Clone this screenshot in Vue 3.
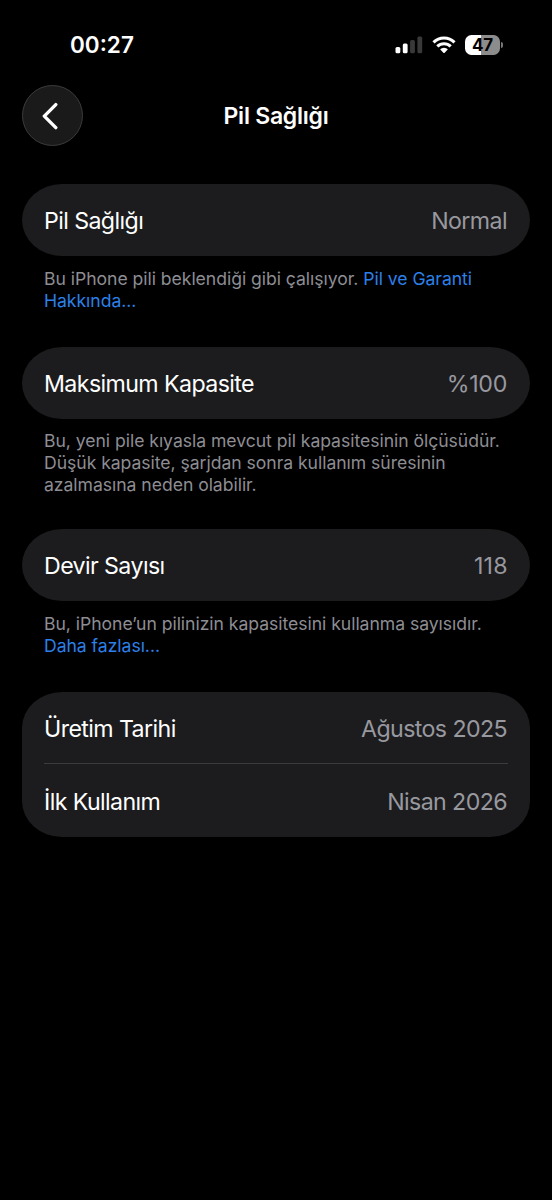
<script setup>
const sections = [
  {
    id: 'health',
    rows: [{ label: 'Pil Sağlığı', value: 'Normal' }],
    lines: [
      { text: 'Bu iPhone pili beklendiği gibi çalışıyor. ', link: 'Pil ve Garanti' },
      { link: 'Hakkında...' },
    ],
  },
  {
    id: 'capacity',
    rows: [{ label: 'Maksimum Kapasite', value: '%100' }],
    lines: [
      { text: 'Bu, yeni pile kıyasla mevcut pil kapasitesinin ölçüsüdür.' },
      { text: 'Düşük kapasite, şarjdan sonra kullanım süresinin' },
      { text: 'azalmasına neden olabilir.' },
    ],
  },
  {
    id: 'cycles',
    rows: [{ label: 'Devir Sayısı', value: '118' }],
    lines: [
      { text: 'Bu, iPhone’un pilinizin kapasitesini kullanma sayısıdır.' },
      { link: 'Daha fazlası...' },
    ],
  },
  {
    id: 'dates',
    rows: [
      { label: 'Üretim Tarihi', value: 'Ağustos 2025' },
      { label: 'İlk Kullanım', value: 'Nisan 2026' },
    ],
    lines: [],
  },
]
</script>

<template>
  <main class="screen">
    <div class="status">
      <span class="time">00:27</span>
      <div class="indicators">
        <svg class="signal" width="28" height="18" viewBox="0 0 28 18">
          <rect x="0.5" y="11" width="4.8" height="6.3" rx="1.5" fill="#fff" />
          <rect x="7.8" y="7.5" width="4.8" height="9.8" rx="1.5" fill="#fff" />
          <rect x="15.1" y="4" width="4.8" height="13.3" rx="1.5" fill="#39393a" />
          <rect x="22.4" y="0.5" width="4.8" height="16.8" rx="1.5" fill="#39393a" />
        </svg>
        <svg class="wifi" width="24" height="18" viewBox="0 0 24 18">
          <g fill="none" stroke="#fff" stroke-width="3.1">
            <path d="M1.5 6.3a15 15 0 0 1 21 0" />
            <path d="M5.3 10.4a9.6 9.6 0 0 1 13.4 0" />
          </g>
          <path d="M8.1 13.3a5.7 5.7 0 0 1 7.8 0L12.7 16.7q-.7.7-1.4 0z" fill="#fff" />
        </svg>
        <div class="battery">
          <span class="cell">47</span>
          <span class="cap"></span>
        </div>
      </div>
    </div>

    <header class="nav">
      <button class="back" aria-label="Geri">
        <svg width="18" height="28" viewBox="0 0 18 28">
          <path d="M14.8 2.6 3.3 14.1l11.5 11.5" fill="none" stroke="#fff" stroke-width="3.4" stroke-linecap="round" stroke-linejoin="round" />
        </svg>
      </button>
      <h1 class="title">Pil Sağlığı</h1>
    </header>

    <section v-for="s in sections" :key="s.id" class="section" :class="s.id">
      <div class="card">
        <div v-for="r in s.rows" :key="r.label" class="row">
          <span class="label">{{ r.label }}</span>
          <span class="value">{{ r.value }}</span>
        </div>
      </div>
      <p v-if="s.lines.length" class="note">
        <span v-for="(l, i) in s.lines" :key="i" class="line">{{ l.text }}<a v-if="l.link" class="link">{{ l.link }}</a></span>
      </p>
    </section>
  </main>
</template>

<style>
html, body { margin: 0; background: #000; }
</style>

<style scoped>
.screen {
  box-sizing: border-box;
  width: 552px;
  height: 1200px;
  overflow: hidden;
  background: #000;
  color: #fff;
  font-family: Inter, "Liberation Sans", sans-serif;
}
.status {
  display: flex;
  align-items: center;
  justify-content: space-between;
  box-sizing: border-box;
  height: 85px;
  padding: 5px 49px 0 70px;
}
.time { padding-bottom: 2px; font-size: 22.5px; font-weight: 600; letter-spacing: 0; }
.indicators { display: flex; align-items: center; }
.wifi { margin-left: 9px; }
.battery { display: flex; align-items: center; margin-left: 9px; }
.cell {
  width: 35px;
  height: 20px;
  border-radius: 6.5px;
  background: linear-gradient(90deg, #fff 47%, #8c8c8c 47%);
  color: #000;
  font-size: 17px;
  line-height: 20px;
  font-weight: 700;
  letter-spacing: -0.3px;
  text-align: center;
}
.cap { width: 2px; height: 6px; margin-left: 1px; border-radius: 0 3px 3px 0; background: #777; }
.nav {
  display: grid;
  grid-template-columns: 61px 1fr 61px;
  align-items: center;
  height: 61px;
  padding: 0 22px;
  margin-bottom: 38px;
}
.back {
  display: flex;
  align-items: center;
  justify-content: center;
  box-sizing: border-box;
  width: 61px;
  height: 61px;
  padding: 0 5px 0 0;
  border: 1px solid #3b3b3c;
  border-radius: 50%;
  background: #1a1a1b;
}
.title { margin: 0; text-align: center; font-size: 23px; line-height: 30px; font-weight: 600; letter-spacing: -0.25px; }
.section { padding: 0 22px; margin-bottom: 35px; }
.capacity { margin-bottom: 33px; }
.card { border-radius: 40px / 36px; background: #1c1c1e; }
.row {
  display: flex;
  align-items: center;
  justify-content: space-between;
  box-sizing: border-box;
  height: 72px;
  margin: 0 22px;
  padding-top: 2px;
  font-size: 23.2px;
  letter-spacing: -0.6px;
}
.dates .row:first-child { height: 71px; padding-top: 3px; }
.row + .row { height: 74px; border-top: 1px solid #3b3b3e; }
.value { padding-right: 1px; color: #98989f; }
.capacity .value { letter-spacing: -0.3px; }
.cycles .value { letter-spacing: 0.3px; padding-right: 0; }
.note { margin: 0; padding: 12px 22px 0; color: #8d8d93; font-size: 17.6px; line-height: 22px; letter-spacing: -0.04px; }
.capacity .note { padding-top: 11px; }
.line { display: block; white-space: pre; }
.link { color: #2c80ea; }
</style>
